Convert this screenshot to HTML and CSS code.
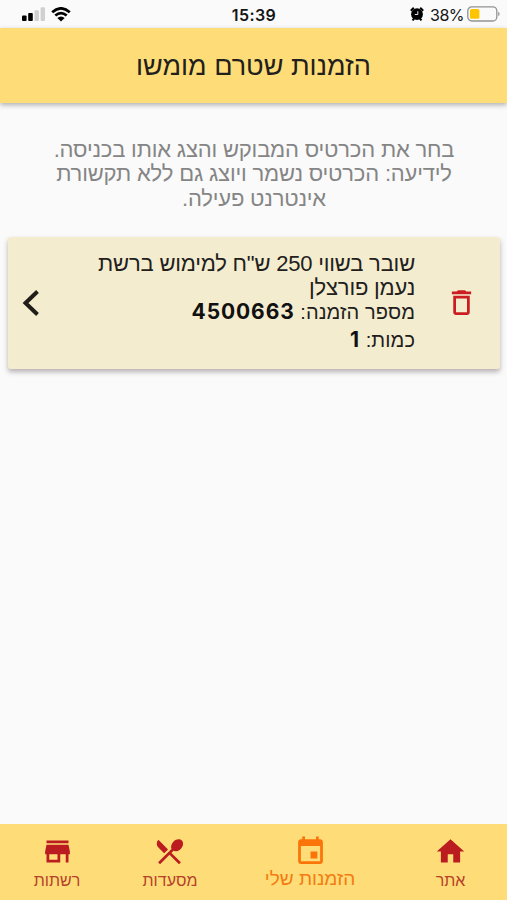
FILE: index.html
```html
<!DOCTYPE html>
<html lang="he" dir="rtl">
<head>
<meta charset="utf-8">
<meta name="viewport" content="width=device-width, initial-scale=1">
<title>הזמנות שטרם מומשו</title>
<link rel="stylesheet" href="styles.css">
</head>
<body>
<div class="app">
  <div class="status" dir="ltr">
    <div class="status-side">
      <svg class="signal" viewBox="0 0 24 14"><rect x="0" y="8.5" width="4.6" height="5.5" rx="1"/><rect x="6.2" y="6" width="4.6" height="8" rx="1"/><rect class="faint" x="12.5" y="3.2" width="4.4" height="10.8" rx="1"/><rect class="faint" x="18.6" y="0.2" width="4.4" height="13.8" rx="1"/></svg>
      <svg class="wifi" viewBox="0 0 20 15"><path d="M1.2 5.3Q10-2.6 18.8 5.3M4.3 8.6Q10 3.6 15.7 8.6" fill="none" stroke="#000" stroke-width="2.7"/><path d="M10 14.6 6.3 11Q10 7.9 13.7 11Z"/></svg>
    </div>
    <div class="clock">15:39</div>
    <div class="status-side status-end">
      <svg class="alarm" viewBox="0 0 14 14"><circle cx="7" cy="7.2" r="5.9"/><path d="M.8 3.8 3.8.8M13.2 3.8 10.2.8M2.5 13.4l1.7-2M11.5 13.4l-1.7-2" stroke="#000" stroke-width="2"/><path d="M7.8 4.2v3.3H4.8" fill="none" stroke="#fafafa" stroke-width=".9"/></svg>
      <span class="percent">38%</span>
      <svg class="battery" viewBox="0 0 33 16"><rect x=".8" y=".8" width="29" height="14.2" rx="4" fill="none" stroke="#929292" stroke-width="1.3"/><rect x="3" y="3" width="9.4" height="9.8" rx="1.5" fill="#ffc400"/><path d="M31.2 5.5Q34 7.9 31.2 10.3Z" fill="#929292"/></svg>
    </div>
  </div>
  <header class="header"><h1>הזמנות שטרם מומשו</h1></header>
  <main class="main">
    <p class="intro">בחר את הכרטיס המבוקש והצג אותו בכניסה.<br>לידיעה: הכרטיס נשמר ויוצג גם ללא תקשורת<br>אינטרנט פעילה.</p>
    <article class="card">
      <svg class="trash" viewBox="0 0 24 24"><path d="M6 19c0 1.1.9 2 2 2h8c1.1 0 2-.9 2-2V7H6v12zM8 9h8v10H8V9zm7.5-5-1-1h-5l-1 1H5v2h14V4h-3.5z"/></svg>
      <div class="details">
        <div class="name">שובר בשווי 250 ש"ח למימוש ברשת<br>נעמן פורצלן</div>
        <div class="meta">מספר הזמנה: <b>4500663</b></div>
        <div class="meta">כמות: <b>1</b></div>
      </div>
      <svg class="chevron" viewBox="0 0 18 28"><path d="M15.5 2.5 3.5 14l12 11.5"/></svg>
    </article>
  </main>
  <nav class="nav">
    <a class="tab"><svg viewBox="0 0 24 24"><path d="M10 20v-6h4v6h5v-8h3L12 3 2 12h3v8z"/></svg><span>אתר</span></a>
    <a class="tab tab-orders"><svg viewBox="0 0 24 24"><path d="M17 12h-5v5h5v-5zM16 1v2H8V1H6v2H5c-1.11 0-1.99.9-1.99 2L3 19c0 1.1.89 2 2 2h14c1.1 0 2-.9 2-2V5c0-1.1-.9-2-2-2h-1V1h-2zm3 18H5V8h14v11z"/></svg><span>הזמנות שלי</span></a>
    <a class="tab tab-food"><svg viewBox="0 0 24 24"><path d="M8.1 13.34l2.83-2.83L3.91 3.5c-1.56 1.56-1.56 4.09 0 5.66l4.19 4.18zm6.78-1.81c1.53.71 3.68.21 5.27-1.38 1.91-1.91 2.28-4.65.81-6.12-1.46-1.46-4.2-1.1-6.12.81-1.59 1.59-2.09 3.74-1.38 5.27L3.7 19.87l1.41 1.41L12 14.41l6.88 6.88 1.41-1.41L13.41 13l1.47-1.47z"/></svg><span>מסעדות</span></a>
    <a class="tab"><svg viewBox="0 0 24 24"><path d="M20 4H4v2h16V4zm1 10v-2l-1-5H4l-1 5v2h1v6h10v-6h4v6h2v-6h1zm-9 4H6v-4h6v4z"/></svg><span>רשתות</span></a>
  </nav>
</div>
</body>
</html>
```
FILE: styles.css
```css
* { box-sizing: border-box; }
body { margin: 0; background: #fafafa; font-family: "Liberation Sans", sans-serif; color: #21201c; }
.app { height: 900px; display: flex; flex-direction: column; }
svg { display: block; flex: none; }

.status { height: 28px; flex: none; display: grid; grid-template-columns: 1fr auto 1fr; align-items: center; padding: 0 7px 0 22px; font-family: Inter, sans-serif; color: #151515; }
.status-side { display: flex; align-items: center; }
.status-end { justify-content: flex-end; }
.signal { width: 24px; height: 14px; }
.faint { fill: #d0d0d0; }
.wifi { width: 20px; height: 15px; margin-left: 5px; }
.clock { font-size: 16px; font-weight: 600; letter-spacing: .4px; margin-right: 14px; padding-top: 2px; }
.alarm { width: 14px; height: 14px; margin-right: 6px; }
.percent { font-size: 16px; letter-spacing: -.5px; padding-top: 2px; }
.battery { width: 33px; height: 16px; margin-left: 3px; }

.header { height: 75px; flex: none; display: flex; align-items: center; justify-content: center; background: #fedd78; box-shadow: 0 2px 5px rgba(0, 0, 0, .3); }
.header h1 { margin: 0; font-size: 27px; font-weight: 400; line-height: 32px; }

.main { flex: 1; padding: 35px 7px 0 8px; }
.intro { margin: 0; text-align: center; font-size: 22px; line-height: 24.3px; letter-spacing: -.18px; color: #858585; white-space: nowrap; }
.card { height: 132px; margin-top: 26px; display: flex; padding: 15px 22px 0 14px; background: #f4eccf; border-radius: 3px; box-shadow: 0 3px 5px rgba(60, 40, 50, .35); }
.trash { width: 33px; height: 33px; margin-top: 34px; fill: #cb1c22; }
.details { flex: 1; margin-right: 30px; white-space: nowrap; }
.name { margin-bottom: -2px; font-size: 22px; line-height: 24px; letter-spacing: -.2px; }
.meta { font-size: 20px; line-height: 28px; letter-spacing: .1px; }
.meta b { font-family: Inter, sans-serif; font-size: 21px; line-height: 20px; font-weight: 700; letter-spacing: .9px; color: #111; }
.chevron { width: 18px; height: 28px; margin-top: 37px; fill: none; stroke: #211d18; stroke-width: 4; }

.nav { height: 76px; flex: none; display: grid; grid-template-columns: 113px 168px 112px 114px; background: #fedd78; color: #b6412a; }
.tab { display: flex; flex-direction: column; align-items: center; padding-top: 11px; font-size: 16px; line-height: 26px; white-space: nowrap; }
.tab svg { width: 33px; height: 33px; fill: #bb1c20; }
.tab-food svg { margin-left: 2px; margin-right: 0; transform: translateX(-2px); }
.tab-orders { color: #f47b10; font-size: 19px; line-height: 22px; }
.tab-orders svg { fill: #fb7409; }
```
